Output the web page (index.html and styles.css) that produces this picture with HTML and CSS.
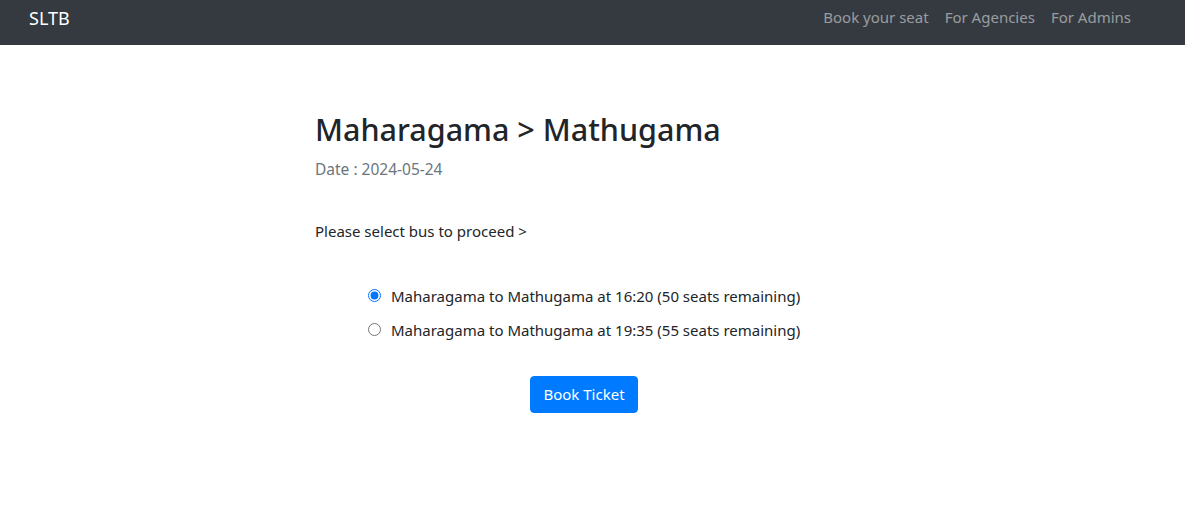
FILE: index.html
```html
<!DOCTYPE html>
<html>
<head>
<meta charset="utf-8">
<link rel="stylesheet" href="styles.css">
</head>
<body>
<nav class="navbar">
  <a class="brand" href="#">SLTB</a>
  <div class="nav-links">
    <a href="#">Book your seat</a>
    <a href="#">For Agencies</a>
    <a href="#">For Admins</a>
  </div>
</nav>
<main class="content">
  <h2 class="title">Maharagama &gt; Mathugama</h2>
  <p class="date">Date : 2024-05-24</p>
  <p class="prompt">Please select bus to proceed &gt;</p>
  <form class="bus-form">
    <div class="options">
      <label class="option"><input type="radio" name="bus" checked><span>Maharagama to Mathugama at 16:20 (50 seats remaining)</span></label>
      <label class="option"><input type="radio" name="bus"><span>Maharagama to Mathugama at 19:35 (55 seats remaining)</span></label>
    </div>
    <div class="actions">
      <button type="button" class="btn">Book Ticket</button>
    </div>
  </form>
</main>
</body>
</html>
```
FILE: styles.css
```css
* { box-sizing: border-box; }
body {
  margin: 0;
  font-family: "Noto Sans", "Open Sans", sans-serif;
  font-size: 16px;
  color: #212529;
  background: #fff;
}
.navbar {
  height: 45px;
  background: #343a40;
  display: flex;
  align-items: center;
  justify-content: space-between;
  padding: 0 54px 0 29px;
}
.brand {
  color: #fff;
  text-decoration: none;
  font-size: 18px;
  line-height: 1;
  margin-top: -9px;
}
.nav-links {
  display: flex;
  gap: 16px;
  margin-top: -12px;
}
.nav-links a {
  color: rgba(255,255,255,.5);
  text-decoration: none;
  font-size: 15px;
}
.content {
  width: 555px;
  margin: 0 auto;
  padding-top: 66px;
}
.title {
  margin: 0;
  font-size: 30.5px;
  font-weight: 500;
  line-height: 1.2;
}
.date {
  margin: 10px 0 0;
  color: #6c757d;
  font-size: 15.5px;
}
.prompt {
  margin: 41px 0 0;
  font-size: 15px;
}
.bus-form {
  margin-top: 45px;
}
.options {
  display: flex;
  flex-direction: column;
  gap: 14px;
  padding-left: 53px;
}
.option {
  display: flex;
  align-items: center;
  gap: 10px;
  font-size: 15px;
}
.option input {
  margin: 0;
  width: 13px;
  height: 13px;
}
.actions {
  display: flex;
  justify-content: center;
  padding-right: 17px;
  margin-top: 36px;
}
.btn {
  background: #007bff;
  color: #fff;
  border: 1px solid #007bff;
  border-radius: 4px;
  font-family: inherit;
  font-size: 15px;
  padding: 7px 12px;
  line-height: 1.4;
}
```
